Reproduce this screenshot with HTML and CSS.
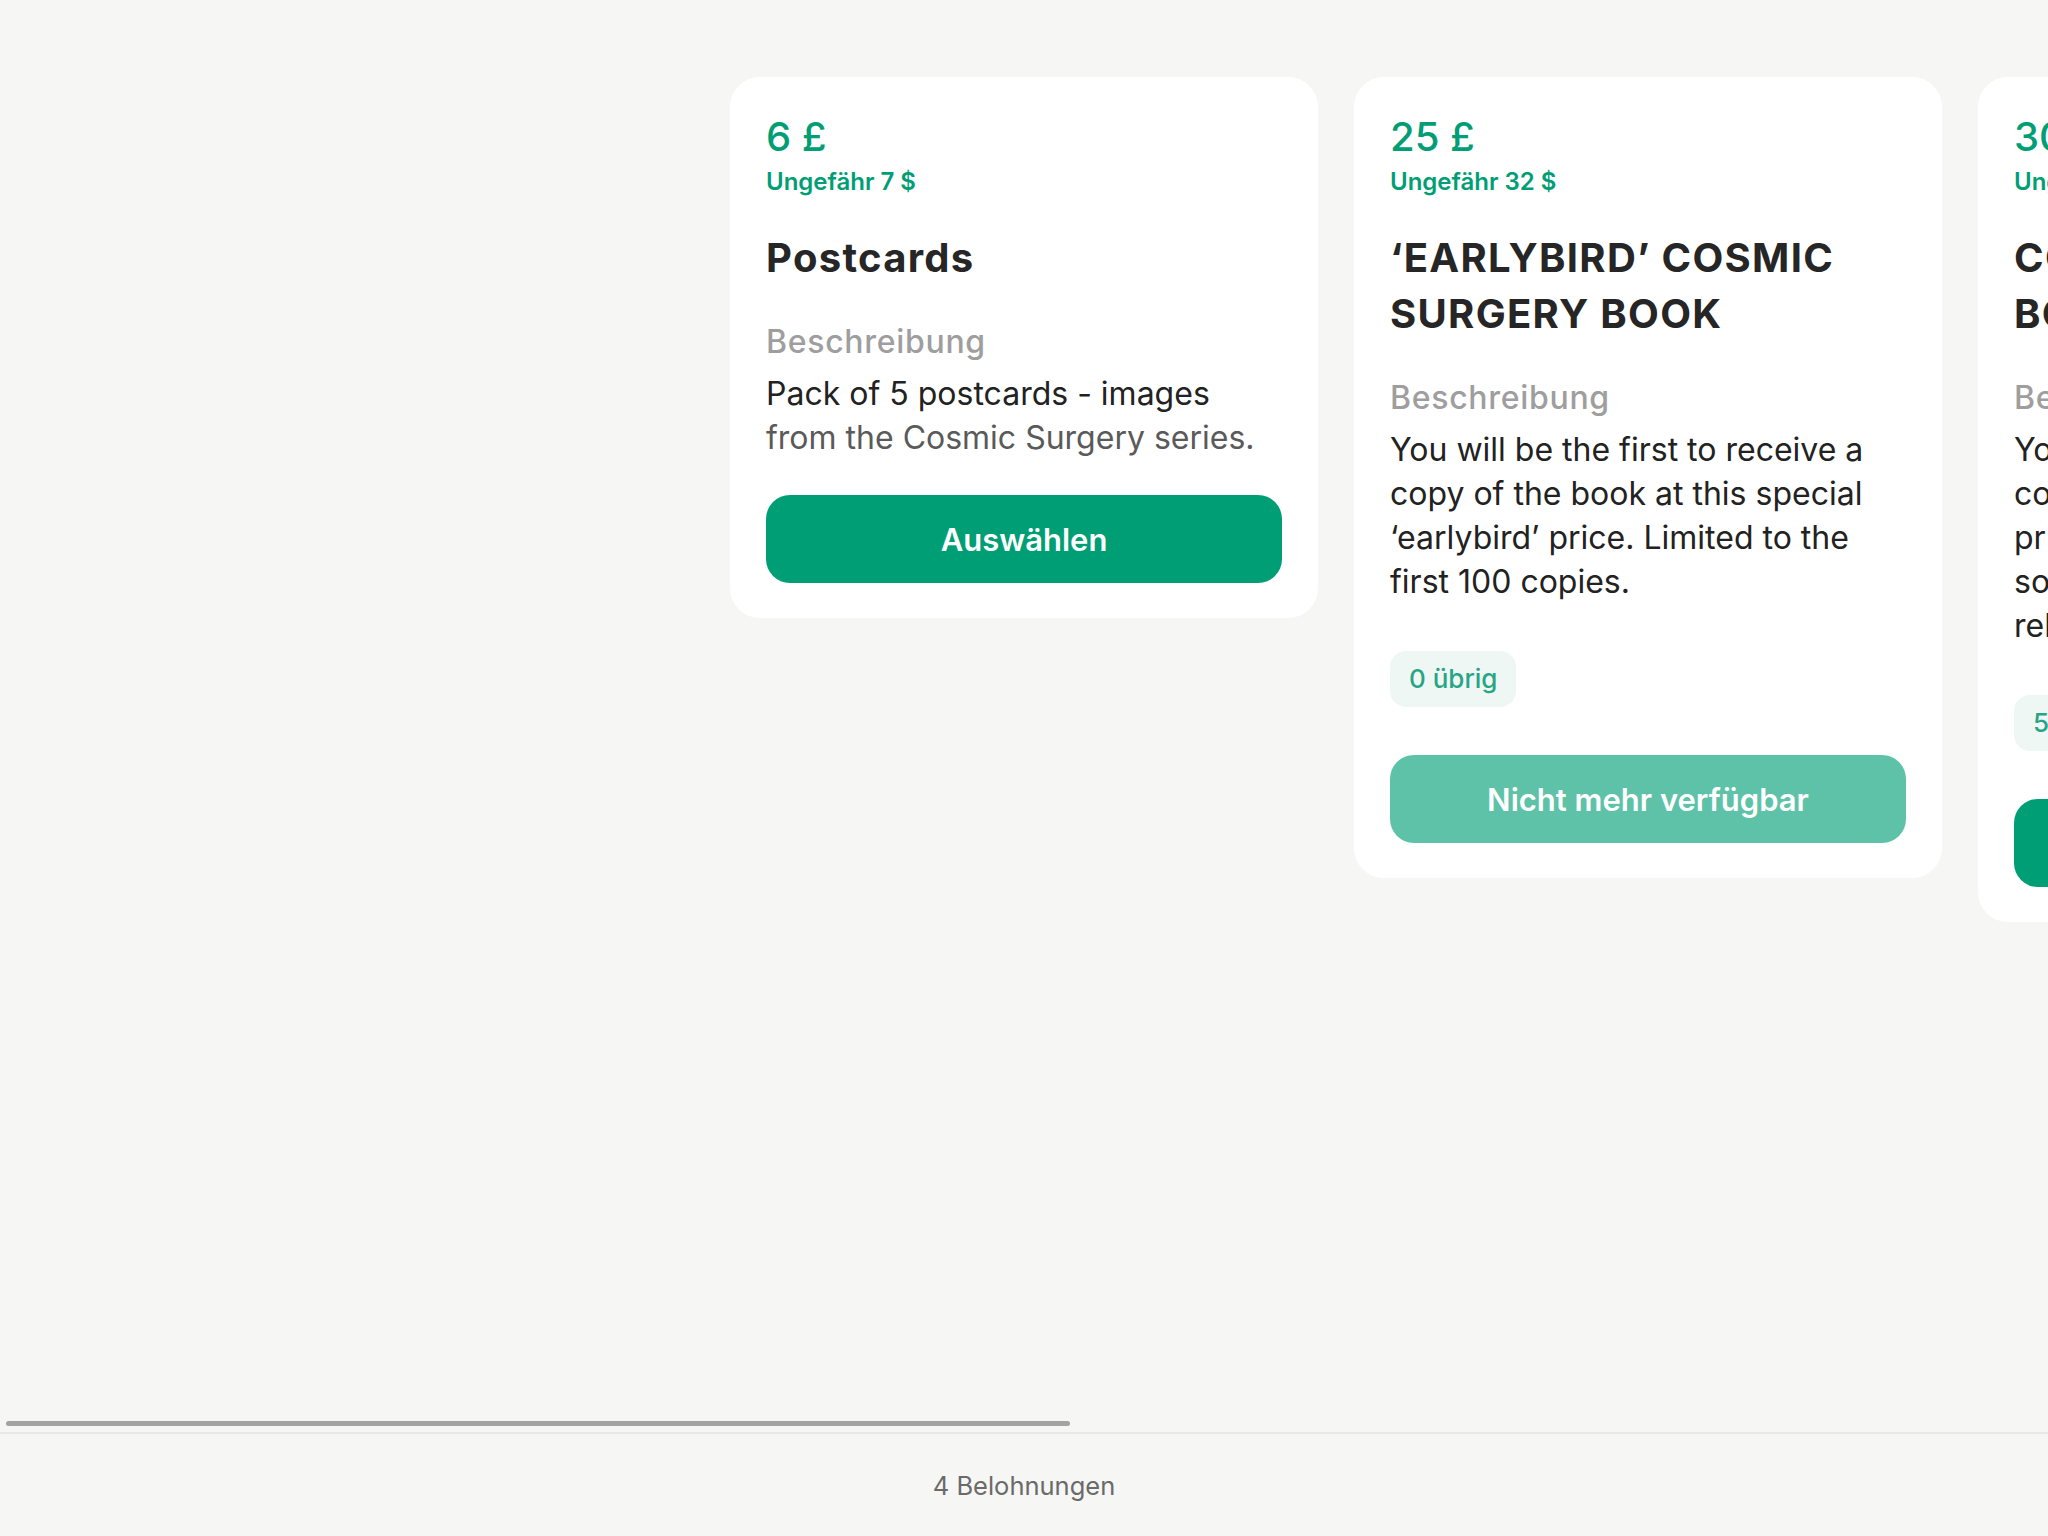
FILE: index.html
```html
<!DOCTYPE html>
<html lang="de">
<head>
<meta charset="utf-8">
<title>Belohnungen</title>
<link rel="stylesheet" href="styles.css">
</head>
<body>
<main class="rewards">
  <div class="rewards-track">
    <article class="card">
      <div class="price">6 £</div>
      <div class="approx">Ungefähr 7 $</div>
      <h2 class="title">Postcards</h2>
      <div class="label">Beschreibung</div>
      <p class="desc"><span class="desc-line">Pack of 5 postcards - images</span><span class="desc-line desc-line--muted">from the Cosmic Surgery series.</span></p>
      <button class="btn" type="button">Auswählen</button>
    </article>
    <article class="card">
      <div class="price">25 £</div>
      <div class="approx">Ungefähr 32 $</div>
      <h2 class="title">‘EARLYBIRD’ COSMIC SURGERY BOOK</h2>
      <div class="label">Beschreibung</div>
      <p class="desc">You will be the first to receive a copy of the book at this special ‘earlybird’ price. Limited to the first 100 copies.</p>
      <div class="stock">0 übrig</div>
      <button class="btn btn--disabled" type="button" disabled>Nicht mehr verfügbar</button>
    </article>
    <article class="card">
      <div class="price">30 £</div>
      <div class="approx">Ungefähr 38 $</div>
      <h2 class="title"><span class="desc-line">COSMIC SURGERY</span><span class="desc-line">BOOK</span></h2>
      <div class="label">Beschreibung</div>
      <p class="desc"><span class="desc-line">You will receive a signed</span><span class="desc-line">copy of the book at the</span><span class="desc-line">price it will retail for. Sent as</span><span class="desc-line">soon as the book is</span><span class="desc-line">released.</span></p>
      <div class="stock">50 übrig</div>
      <button class="btn" type="button">Auswählen</button>
    </article>
    <article class="card">
      <div class="price">100 £</div>
      <div class="approx">Ungefähr 127 $</div>
      <h2 class="title">SIGNED PRINT AND BOOK</h2>
      <div class="label">Beschreibung</div>
      <p class="desc">A signed copy of the book together with a limited edition print from the Cosmic Surgery series.</p>
      <div class="stock">20 übrig</div>
      <button class="btn" type="button">Auswählen</button>
    </article>
  </div>
</main>
<div class="scroll-indicator" aria-hidden="true">
  <div class="scroll-thumb" style="width: 52.26%;"></div>
</div>
<footer class="footer">4 Belohnungen</footer>
</body>
</html>
```

FILE: styles.css
```css
* {
  box-sizing: border-box;
}

html,
body {
  margin: 0;
  height: 100%;
}

body {
  display: flex;
  flex-direction: column;
  background: #f6f6f4;
  font-family: Inter, "Noto Sans", "Liberation Sans", sans-serif;
  color: #222222;
}

.rewards {
  flex: 1;
  min-height: 0;
  overflow-x: auto;
  overflow-y: hidden;
  scrollbar-width: none;
}

.rewards::-webkit-scrollbar {
  display: none;
}

.rewards-track {
  display: flex;
  align-items: flex-start;
  gap: 36px;
  padding: 77px 730px 0;
  width: max-content;
}

.card {
  flex: none;
  width: 588px;
  background: #ffffff;
  border-radius: 30px;
  padding: 36px 36px 35px;
  display: flex;
  flex-direction: column;
  align-items: flex-start;
}

.price {
  font-size: 40px;
  line-height: 48px;
  font-weight: 500;
  color: #009e74;
}

.approx {
  margin-top: 6px;
  font-size: 24px;
  line-height: 29px;
  font-weight: 600;
  color: #009e74;
}

.title {
  margin: 34px 0 0;
  font-size: 40px;
  line-height: 56px;
  font-weight: 700;
  letter-spacing: 1.3px;
  color: #262626;
}

.label {
  margin-top: 34px;
  font-size: 32px;
  line-height: 43px;
  font-weight: 500;
  letter-spacing: 0.7px;
  color: #9e9e9e;
}

.desc {
  margin: 9px 0 0;
  font-size: 32px;
  line-height: 44px;
  font-weight: 400;
  color: #222222;
}

.desc-line {
  display: block;
}

.desc-line--muted {
  color: #5a5a5a;
}

.stock {
  margin: 47px 0 13px;
  padding: 12px 19px;
  border-radius: 16px;
  background: #eff7f4;
  color: #27a584;
  font-size: 26px;
  line-height: 32px;
  font-weight: 500;
}

.btn {
  margin-top: 35px;
  width: 100%;
  height: 88px;
  border: 0;
  border-radius: 24px;
  background: #009e74;
  color: #ffffff;
  font-family: inherit;
  font-size: 31px;
  font-weight: 600;
  cursor: pointer;
}

.btn--disabled,
.btn--disabled:disabled {
  background: #5ec2a8;
  color: #ffffff;
  cursor: default;
}

.scroll-indicator {
  flex: none;
  height: 5px;
  margin: 0 6px 6px;
}

.scroll-thumb {
  height: 100%;
  border-radius: 3px;
  background: #a3a3a3;
}

.footer {
  flex: none;
  height: 104px;
  border-top: 2px solid #e8e8e6;
  display: flex;
  align-items: center;
  justify-content: center;
  font-size: 25.5px;
  color: #6a6a6a;
}
```
